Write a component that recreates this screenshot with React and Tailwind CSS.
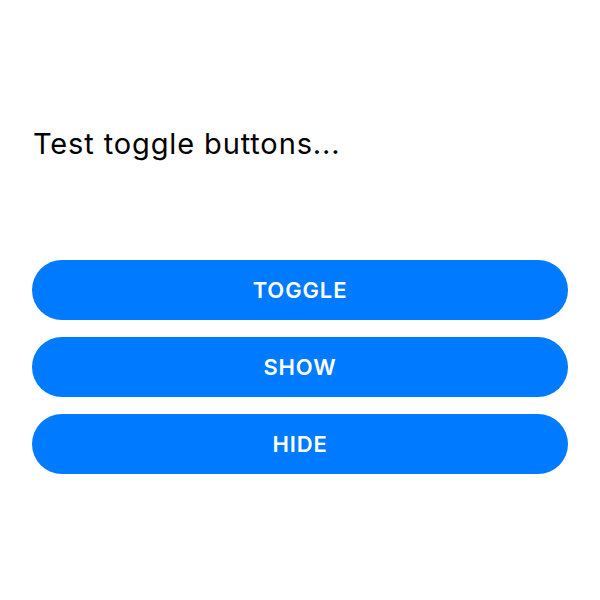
export default function App() {
  const buttons = ["TOGGLE", "SHOW", "HIDE"];

  return (
    <div className="min-h-screen bg-white px-8 pt-[124px] font-['Inter',sans-serif]">
      <p className="text-[29px] leading-[40px] tracking-[0.03em] text-black pl-px">Test toggle buttons...</p>

      <div className="mt-[96px] flex flex-col gap-[17px]">
        {buttons.map((label) => (
          <button
            key={label}
            className="h-[60px] w-full rounded-full bg-[#007aff] text-[22px] font-semibold tracking-[0.04em] text-white"
          >
            {label}
          </button>
        ))}
      </div>
    </div>
  );
}
